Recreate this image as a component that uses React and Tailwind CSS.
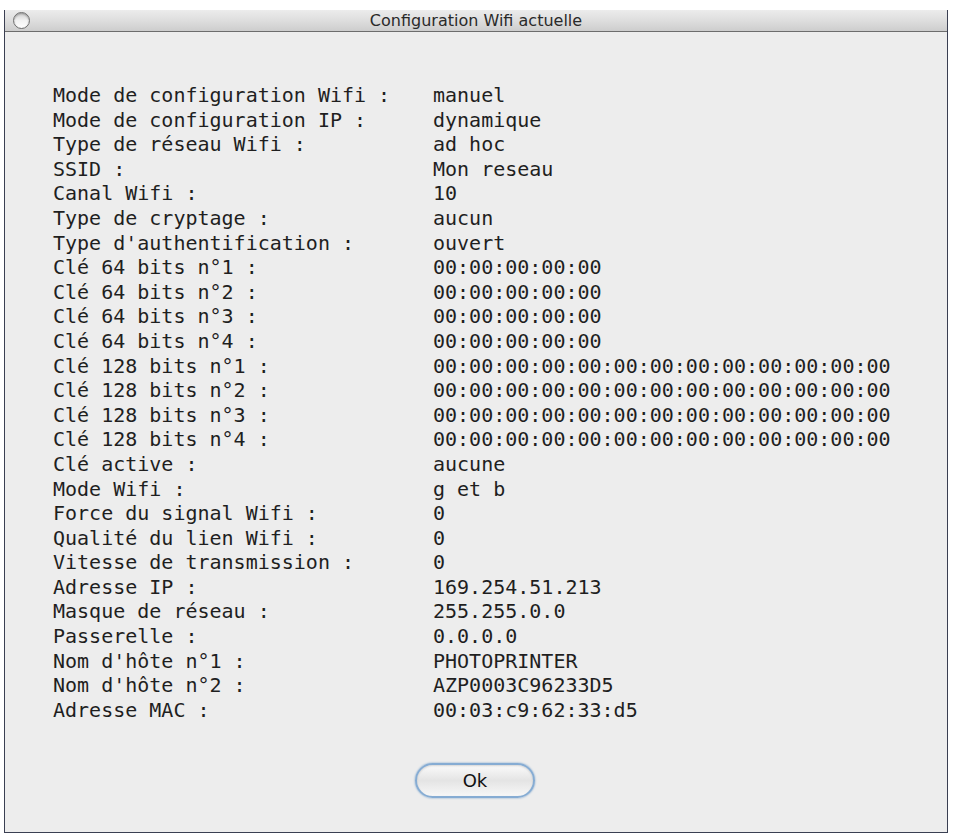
const rows = [
  ["Mode de configuration Wifi :", "manuel"],
  ["Mode de configuration IP :", "dynamique"],
  ["Type de réseau Wifi :", "ad hoc"],
  ["SSID :", "Mon reseau"],
  ["Canal Wifi :", "10"],
  ["Type de cryptage :", "aucun"],
  ["Type d'authentification :", "ouvert"],
  ["Clé 64 bits n°1 :", "00:00:00:00:00"],
  ["Clé 64 bits n°2 :", "00:00:00:00:00"],
  ["Clé 64 bits n°3 :", "00:00:00:00:00"],
  ["Clé 64 bits n°4 :", "00:00:00:00:00"],
  ["Clé 128 bits n°1 :", "00:00:00:00:00:00:00:00:00:00:00:00:00"],
  ["Clé 128 bits n°2 :", "00:00:00:00:00:00:00:00:00:00:00:00:00"],
  ["Clé 128 bits n°3 :", "00:00:00:00:00:00:00:00:00:00:00:00:00"],
  ["Clé 128 bits n°4 :", "00:00:00:00:00:00:00:00:00:00:00:00:00"],
  ["Clé active :", "aucune"],
  ["Mode Wifi :", "g et b"],
  ["Force du signal Wifi :", "0"],
  ["Qualité du lien Wifi :", "0"],
  ["Vitesse de transmission :", "0"],
  ["Adresse IP :", "169.254.51.213"],
  ["Masque de réseau :", "255.255.0.0"],
  ["Passerelle :", "0.0.0.0"],
  ["Nom d'hôte n°1 :", "PHOTOPRINTER"],
  ["Nom d'hôte n°2 :", "AZP0003C96233D5"],
  ["Adresse MAC :", "00:03:c9:62:33:d5"],
];

export default function App() {
  return (
    <div className="w-[953px] h-[837px] bg-white pt-[10px] pl-[4px]">
      <div className="w-[944px] h-[823px] flex flex-col bg-[#ededed] border-l border-r border-b border-[#3a3f52] border-t-0">
        <div className="relative h-[22px] flex items-center justify-center bg-gradient-to-b from-[#ececec] via-[#dedede] to-[#cdcdcd] border-b border-[#6d6d6d]">
          <div className="absolute left-[8px] top-[2px] w-[17px] h-[17px] rounded-full border border-[#6f6f6f] bg-gradient-to-b from-[#cfcfcf] via-[#f2f2f2] to-[#ffffff] shadow-[inset_0_1px_2px_rgba(0,0,0,0.3)]" />
          <span className="text-[16px] text-[#2a2a2a] font-['DejaVu_Sans',sans-serif] leading-none pt-[1px]">
            Configuration Wifi actuelle
          </span>
        </div>
        <div className="flex-1 flex flex-col pl-[48px] pt-[51px]">
          <div className="grid grid-cols-[380px_1fr] font-['DejaVu_Sans_Mono',monospace] text-[20px] leading-[24.6px] text-[#1f1f1f]">
            {rows.map(([k, v], i) => (
              <div key={i} className="contents">
                <div className="whitespace-pre">{k}</div>
                <div className="whitespace-pre">{v}</div>
              </div>
            ))}
          </div>
          <div className="flex justify-center pr-[50px] mt-[41px]">
            <button className="w-[120px] h-[35px] rounded-full border-[2px] border-[#86acd3] bg-gradient-to-b from-[#fbfbfb] via-[#e4e4e4] to-[#f7f7f7] shadow-[0_0_2px_#6e9cc9,inset_0_1px_2px_rgba(0,0,0,0.15)] text-[18px] text-[#111] font-['DejaVu_Sans',sans-serif] flex items-center justify-center">
              Ok
            </button>
          </div>
        </div>
      </div>
    </div>
  );
}
